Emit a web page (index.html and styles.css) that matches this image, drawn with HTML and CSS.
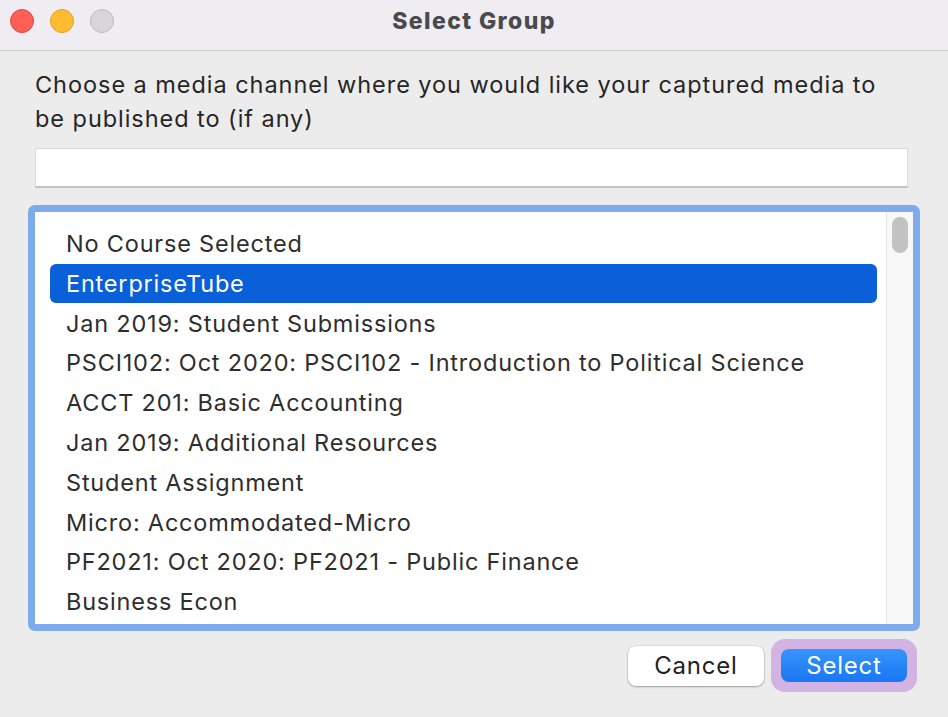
FILE: index.html
```html
<!DOCTYPE html>
<html>
<head>
<meta charset="utf-8">
<link rel="stylesheet" href="styles.css">
</head>
<body>
<div class="window">
  <div class="titlebar">
    <div class="lights">
      <span class="light red"></span>
      <span class="light yellow"></span>
      <span class="light gray"></span>
    </div>
    <div class="title">Select Group</div>
  </div>
  <div class="content">
    <p class="prompt">Choose a media channel where you would like your captured media to be published to (if any)</p>
    <div class="search"></div>
    <div class="listbox">
      <ul class="list">
        <li class="item">No Course Selected</li>
        <li class="item selected">EnterpriseTube</li>
        <li class="item">Jan 2019: Student Submissions</li>
        <li class="item">PSCI102: Oct 2020: PSCI102 - Introduction to Political Science</li>
        <li class="item">ACCT 201: Basic Accounting</li>
        <li class="item">Jan 2019: Additional Resources</li>
        <li class="item">Student Assignment</li>
        <li class="item">Micro: Accommodated-Micro</li>
        <li class="item">PF2021: Oct 2020: PF2021 - Public Finance</li>
        <li class="item">Business Econ</li>
      </ul>
      <div class="scrollbar"><div class="thumb"></div></div>
    </div>
    <div class="buttons">
      <button class="btn cancel">Cancel</button>
      <div class="default-ring"><button class="btn primary">Select</button></div>
    </div>
  </div>
</div>
</body>
</html>
```
FILE: styles.css
```css
html, body {
  margin: 0;
  padding: 0;
}
body {
  width: 948px;
  height: 717px;
  background: #ececec;
  font-family: "Inter", "Liberation Sans", Arial, sans-serif;
  overflow: hidden;
}
.window {
  width: 948px;
  height: 717px;
  display: flex;
  flex-direction: column;
}
.titlebar {
  background: #efedf2;
  border-bottom: 1px solid #cfcfcf;
  display: flex;
  align-items: center;
  position: relative;
  box-sizing: border-box;
  height: 51px;
}
.lights {
  display: flex;
  gap: 16px;
  padding-left: 10px;
  padding-bottom: 8px;
}
.light {
  width: 24px;
  height: 24px;
  border-radius: 50%;
  box-sizing: border-box;
}
.red { background: #fe5f57; border: 1px solid #e1463f; }
.yellow { background: #febc2e; border: 1px solid #e0a02a; }
.gray { background: #d8d6db; border: 1px solid #bdbbc0; }
.title {
  position: absolute;
  left: 0;
  right: 0;
  top: 7px;
  text-align: center;
  font-weight: 800;
  font-size: 23px;
  letter-spacing: 1.4px;
  color: #4a494c;
  pointer-events: none;
}
.content {
  padding: 17px 28px 0 28px;
  display: flex;
  flex-direction: column;
}
.prompt {
  margin: 0 0 0 7px;
  width: 860px;
  font-size: 23.5px;
  letter-spacing: 0.95px;
  line-height: 34px;
  color: #262626;
}
.search {
  margin: 12px 12px 0 7px;
  height: 40px;
  background: #ffffff;
  border: 1px solid #d8d8d8;
  border-bottom: 2px solid #c2c2c2;
  box-sizing: border-box;
}
.listbox {
  margin-top: 17px;
  height: 426px;
  width: 892px;
  box-sizing: border-box;
  border: 7px solid #7eabee;
  border-radius: 7px;
  background: #ffffff;
  display: flex;
  overflow: hidden;
}
.list {
  list-style: none;
  margin: 0;
  padding: 12px 9px 0 15px;
  flex: 1;
}
.item {
  height: 39px;
  margin-bottom: 0.8px;
  border-radius: 6px;
  padding-left: 16px;
  font-size: 23.5px;
  letter-spacing: 0.8px;
  line-height: 39px;
  color: #2e2e2e;
  white-space: nowrap;
}
.item.selected {
  background: #0a60d8;
  color: #ffffff;
}
.scrollbar {
  width: 27px;
  background: #f8f8f8;
  border-left: 1px solid #e3e3e3;
  padding-top: 5px;
  box-sizing: border-box;
  display: flex;
  justify-content: center;
}
.thumb {
  width: 16px;
  height: 36px;
  border-radius: 8px;
  background: #c2c2c2;
}
.buttons {
  display: flex;
  justify-content: flex-end;
  align-items: center;
  gap: 7px;
  margin-top: 8px;
  padding-right: 3px;
}
.btn {
  font-family: "Inter", "Liberation Sans", Arial, sans-serif;
  font-size: 24px;
  letter-spacing: 0.8px;
  border: none;
  padding: 0;
  cursor: default;
}
.cancel {
  width: 136px;
  height: 40px;
  background: #ffffff;
  color: #222222;
  border-radius: 8px;
  box-shadow: 0 1px 2px rgba(0,0,0,0.3), 0 0 0 0.5px rgba(0,0,0,0.12);
}
.default-ring {
  background: #d3b2e4;
  border-radius: 14px;
  padding: 10px;
  display: flex;
}
.primary {
  width: 126px;
  height: 33px;
  border-radius: 8px;
  color: #ffffff;
  background: linear-gradient(#3894fb, #1877f5);
}
```
